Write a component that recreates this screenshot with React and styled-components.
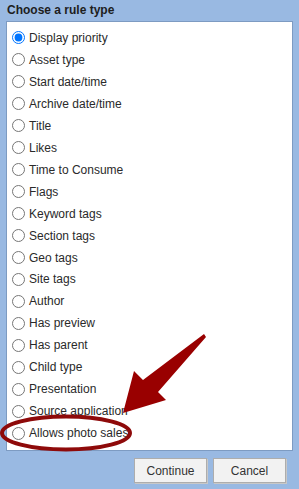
import React, { useState } from 'react';
import styled, { createGlobalStyle } from 'styled-components';

const GlobalStyle = createGlobalStyle`
  html, body {
    margin: 0;
    padding: 0;
    background: #99b9e2;
    font-family: "Liberation Sans", Arial, sans-serif;
  }
`;

const ruleTypes = [
  'Display priority',
  'Asset type',
  'Start date/time',
  'Archive date/time',
  'Title',
  'Likes',
  'Time to Consume',
  'Flags',
  'Keyword tags',
  'Section tags',
  'Geo tags',
  'Site tags',
  'Author',
  'Has preview',
  'Has parent',
  'Child type',
  'Presentation',
  'Source application',
  'Allows photo sales',
];

const App = () => {
  const [selected, setSelected] = useState(0);

  return (
    <>
      <GlobalStyle />
      <Dialog>
        <Heading>Choose a rule type</Heading>
        <Panel>
          {ruleTypes.map((label, index) => (
            <Option key={label}>
              <input
                type="radio"
                name="ruleType"
                checked={index === selected}
                onChange={() => setSelected(index)}
              />
              <span>{label}</span>
            </Option>
          ))}
        </Panel>
        <Footer>
          <Button>Continue</Button>
          <Button>Cancel</Button>
        </Footer>
        <Annotation viewBox="0 0 299 489" width="299" height="489">
          <path
            d="M204 334 L206 337 L158 392 L166 400 L123 413 L134 371 L143 380 Z"
            fill="#990000"
          />
          <ellipse
            cx="66"
            cy="433"
            rx="64"
            ry="16.5"
            fill="none"
            stroke="#8e0a0a"
            strokeWidth="4"
          />
        </Annotation>
      </Dialog>
    </>
  );
};

const Dialog = styled.div`
  position: relative;
  width: 299px;
  height: 489px;
  box-sizing: border-box;
  padding: 0 6px;
  display: flex;
  flex-direction: column;
  overflow: hidden;
`;

const Heading = styled.h3`
  margin: 0;
  height: 21px;
  line-height: 21px;
  padding-left: 1px;
  font-size: 12px;
  font-weight: bold;
  color: #1e1e1e;
`;

const Panel = styled.div`
  box-sizing: border-box;
  width: 287px;
  height: 430px;
  background: #fff;
  border: 1px solid #7d9bc2;
  padding: 5px 0 6px;
  display: flex;
  flex-direction: column;
`;

const Option = styled.label`
  display: flex;
  align-items: center;
  height: 22px;
  font-size: 12px;
  color: #2a2a2a;
  input {
    width: 13px;
    height: 13px;
    margin: 0 4px 0 5px;
    accent-color: #0075ff;
  }
`;

const Footer = styled.div`
  display: flex;
  justify-content: flex-end;
  gap: 6px;
  padding: 7px 0 0;
  margin-right: 7px;
`;

const Button = styled.button`
  width: 73px;
  height: 25px;
  box-sizing: border-box;
  background: #f2f2f2;
  border: 1px solid #adadad;
  box-shadow: 1px 1px 0 #c8c8c8;
  font-family: "Liberation Sans", Arial, sans-serif;
  font-size: 12px;
  color: #333;
  padding: 0;
`;

const Annotation = styled.svg`
  position: absolute;
  left: 0;
  top: 0;
  pointer-events: none;
`;

export default App;
